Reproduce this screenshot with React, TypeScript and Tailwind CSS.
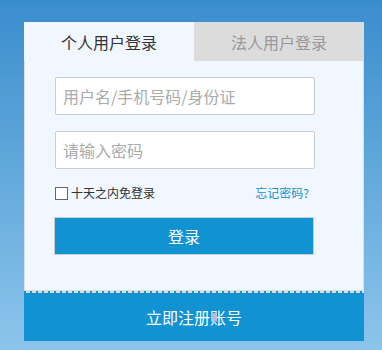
export default function App() {
	return (
		<div className="w-[382px] h-[350px] bg-[linear-gradient(180deg,#3a8dcd_0%,#8cc5eb_100%)] pt-[22px] px-[24px] font-['Noto_Sans_CJK_SC',sans-serif]">
			<div className="w-[340px]">
				{/* tabs */}
				<div className="flex h-[39px] text-[16px]">
					<div className="w-[170px] bg-[#f0f7fe] flex items-center justify-center text-[#333]">个人用户登录</div>
					<div className="flex-1 bg-[#dcdcdc] flex items-center justify-center text-[#999]">法人用户登录</div>
				</div>

				<div className="bg-[#f0f7fe] border-x border-b border-[#dddddd] pt-[16px] pb-[35px] px-[30px]">
					<input
						type="text"
						placeholder="用户名/手机号码/身份证"
						className="block w-[260px] h-[38px] border border-[#cccccc] rounded-[2px] bg-white px-[7px] text-[16px] outline-none placeholder:text-[#aaaaaa] font-['Noto_Sans_CJK_SC',sans-serif]"
					/>
					<input
						type="password"
						placeholder="请输入密码"
						className="block mt-[16px] w-[260px] h-[38px] border border-[#cccccc] rounded-[2px] bg-white px-[7px] text-[16px] outline-none placeholder:text-[#aaaaaa] font-['Noto_Sans_CJK_SC',sans-serif]"
					/>

					<div className="mt-[16px] h-[16px] flex items-center justify-between text-[12px] w-[254px]">
						<label className="flex items-center gap-[3px] text-[#333]">
							<span className="w-[13px] h-[13px] border border-[#666] bg-white"></span>
							十天之内免登录
						</label>
						<a className="text-[#1a8fd0]">忘记密码?</a>
					</div>

					<button className="block mt-[16px] ml-[-1px] w-[260px] h-[38px] border border-[#cccccc] bg-[#1192d3] text-white text-[16px] font-['Noto_Sans_CJK_SC',sans-serif]">
						登录
					</button>
				</div>

				<div className="h-[2px] bg-[repeating-linear-gradient(90deg,#1192d3_0px,#1192d3_2px,#dddddd_2px,#dddddd_6px)]"></div>
				<button className="block w-[340px] h-[48px] bg-[#1192d3] text-white text-[16px] font-['Noto_Sans_CJK_SC',sans-serif]">
					立即注册账号
				</button>
			</div>
		</div>
	)
}
